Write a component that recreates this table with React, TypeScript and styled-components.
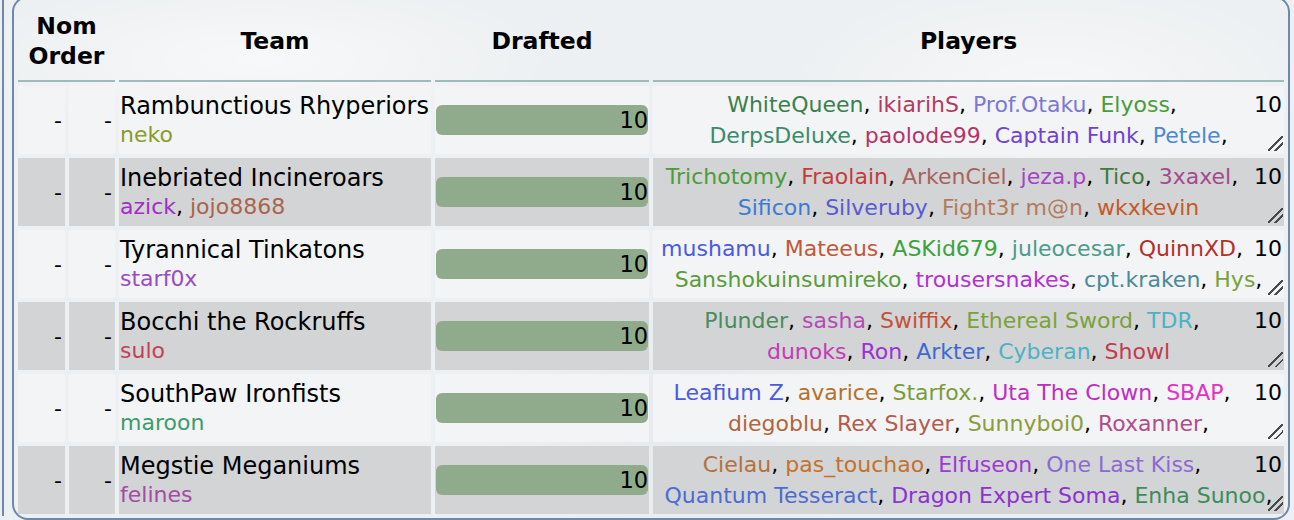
import React from 'react';
import styled, { createGlobalStyle } from 'styled-components';

const GlobalStyle = createGlobalStyle`
  html, body {
    margin: 0;
    padding: 0;
    height: 520px;
    overflow: hidden;
    background:
      radial-gradient(ellipse 420px 120px at 260px 60px, rgba(255, 255, 255, 0.55), rgba(255, 255, 255, 0) 70%),
      radial-gradient(ellipse 380px 160px at 1050px 90px, rgba(255, 255, 255, 0.5), rgba(255, 255, 255, 0) 70%),
      radial-gradient(ellipse 300px 200px at 700px 420px, rgba(220, 226, 232, 0.5), rgba(220, 226, 232, 0) 70%),
      #edf0f2;
  }
  body {
    font-family: "DejaVu Sans", Verdana, sans-serif;
    color: #000;
  }
`;

const Page = styled.div`
  height: 520px;
  box-sizing: border-box;
  margin-left: 2px;
  border-left: 2px solid #7189a9;
  padding: 0 4px 0 8px;
`;

const Panel = styled.div`
  margin-top: -4px;
  border: 2px solid #6c88ab;
  border-radius: 16px;
  overflow: hidden;
`;

const Table = styled.table`
  width: 100%;
  table-layout: fixed;
  border-collapse: separate;
  border-spacing: 4px;
`;

const HeadCell = styled.th`
  height: 78px;
  padding: 0;
  border-bottom: 2px solid #9dbbba;
  font-size: 23.5px;
  line-height: 30px;
  font-weight: bold;
  text-align: center;
  vertical-align: middle;
`;

const Cell = styled.td<{ $alt: boolean }>`
  height: 68px;
  padding: 0 1px;
  vertical-align: middle;
  background: ${p => (p.$alt ? '#d3d4d6' : '#f2f4f5')};
`;

const NomCell = styled(Cell)`
  text-align: right;
  padding-right: 3px;
  font-size: 22px;
`;

const TeamName = styled.div`
  font-size: 24px;
  line-height: 29px;
  white-space: nowrap;
`;

const Managers = styled.div`
  font-size: 22px;
  line-height: 28px;
  white-space: nowrap;
`;

const Name = styled.span<{ $color: string }>`
  color: ${p => p.$color};
`;

const Bar = styled.div`
  height: 30px;
  border-radius: 6px;
  background: #8fab8c;
  text-align: right;
  font-size: 22.5px;
  line-height: 31px;
`;

const PlayersBox = styled.div`
  height: 62px;
  overflow: hidden;
  resize: vertical;
  font-size: 22px;
  line-height: 31px;

  &::-webkit-resizer {
    background: linear-gradient(
      135deg,
      transparent 0 46%,
      #4a4a4a 46% 54%,
      transparent 54% 70%,
      #4a4a4a 70% 78%,
      transparent 78%
    );
  }
`;

const Count = styled.span`
  float: right;
  padding-left: 4px;
  padding-right: 1px;
`;

const PlayerLine = styled.div`
  text-align: center;
  white-space: nowrap;
`;

type Person = [string, string];

interface Team {
  name: string;
  managers: Person[];
  drafted: number;
  lines: Person[][];
  more: boolean;
}

const teams: Team[] = [
  {
    name: 'Rambunctious Rhyperiors',
    managers: [['neko', '#8c9a2c']],
    drafted: 10,
    lines: [
      [['WhiteQueen', '#3d7f4c'], ['ikiarihS', '#b23c5e'], ['Prof.Otaku', '#7d78d3'], ['Elyoss', '#4b9b3a']],
      [['DerpsDeluxe', '#3a8b6b'], ['paolode99', '#b2346c'], ['Captain Funk', '#7142d2'], ['Petele', '#4a8ad2']],
    ],
    more: true,
  },
  {
    name: 'Inebriated Incineroars',
    managers: [['azick', '#a12fc4'], ['jojo8868', '#a8644c']],
    drafted: 10,
    lines: [
      [['Trichotomy', '#4b9c3a'], ['Fraolain', '#c23c3c'], ['ArkenCiel', '#a8645c'], ['jeza.p', '#a444c4'], ['Tico', '#3d7b3d'], ['3xaxel', '#a24c8c']],
      [['Sificon', '#3d7ad4'], ['Silveruby', '#5a5ad2'], ['Fight3r m@n', '#b27c5c'], ['wkxkevin', '#c45a2c']],
    ],
    more: false,
  },
  {
    name: 'Tyrannical Tinkatons',
    managers: [['starf0x', '#9a4cc4']],
    drafted: 10,
    lines: [
      [['mushamu', '#4a5ae2'], ['Mateeus', '#c2583a'], ['ASKid679', '#3da23d'], ['juleocesar', '#4c9a8c'], ['QuinnXD', '#b2302a']],
      [['Sanshokuinsumireko', '#5a9c3c'], ['trousersnakes', '#b230d4'], ['cpt.kraken', '#4a8a9a'], ['Hys', '#7aa23a']],
    ],
    more: true,
  },
  {
    name: 'Bocchi the Rockruffs',
    managers: [['sulo', '#c2405c']],
    drafted: 10,
    lines: [
      [['Plunder', '#4a8c5c'], ['sasha', '#b24cb4'], ['Swiffix', '#c2523a'], ['Ethereal Sword', '#7aa23a'], ['TDR', '#4cb2c4']],
      [['dunoks', '#c23cb4'], ['Ron', '#9a32d4'], ['Arkter', '#3d6ad2'], ['Cyberan', '#4cb2c4'], ['Showl', '#c23c4c']],
    ],
    more: false,
  },
  {
    name: 'SouthPaw Ironfists',
    managers: [['maroon', '#3c9c6c']],
    drafted: 10,
    lines: [
      [['Leafium Z', '#4a5ae2'], ['avarice', '#b2722c'], ['Starfox.', '#7a9c3a'], ['Uta The Clown', '#c22cc4'], ['SBAP', '#e232c4']],
      [['diegoblu', '#b2643c'], ['Rex Slayer', '#b25c4c'], ['Sunnyboi0', '#8c9c3a'], ['Roxanner', '#b24c8c']],
    ],
    more: true,
  },
  {
    name: 'Megstie Meganiums',
    managers: [['felines', '#a24ca4']],
    drafted: 10,
    lines: [
      [['Cielau', '#b2723c'], ['pas_touchao', '#c2722c'], ['Elfuseon', '#9a3cd4'], ['One Last Kiss', '#8c6ad2']],
      [['Quantum Tesseract', '#4c6cd2'], ['Dragon Expert Soma', '#8c32d2'], ['Enha Sunoo', '#3c8c5c']],
    ],
    more: true,
  },
];

const PlayerRow: React.FC<{ people: Person[]; trailing: boolean }> = ({ people, trailing }) => (
  <PlayerLine>
    {people.map(([name, color], i) => (
      <React.Fragment key={name}>
        <Name $color={color}>{name}</Name>
        {i < people.length - 1 || trailing ? ', ' : ''}
      </React.Fragment>
    ))}
  </PlayerLine>
);

const TeamRow: React.FC<{ team: Team; alt: boolean }> = ({ team, alt }) => (
  <tr>
    <NomCell $alt={alt}>-</NomCell>
    <NomCell $alt={alt}>-</NomCell>
    <Cell $alt={alt}>
      <TeamName>{team.name}</TeamName>
      <Managers>
        {team.managers.map(([name, color], i) => (
          <React.Fragment key={name}>
            {i > 0 && ', '}
            <Name $color={color}>{name}</Name>
          </React.Fragment>
        ))}
      </Managers>
    </Cell>
    <Cell $alt={alt}>
      <Bar>{team.drafted}</Bar>
    </Cell>
    <Cell $alt={alt}>
      <PlayersBox>
        <Count>{team.drafted}</Count>
        {team.lines.map((line, i) => (
          <PlayerRow key={i} people={line} trailing={i < team.lines.length - 1 || team.more} />
        ))}
      </PlayersBox>
    </Cell>
  </tr>
);

export default function App() {
  return (
    <>
      <GlobalStyle />
      <Page>
        <Panel>
          <Table>
            <colgroup>
              <col style={{ width: 47 }} />
              <col style={{ width: 46 }} />
              <col style={{ width: 312 }} />
              <col style={{ width: 214 }} />
              <col style={{ width: 631 }} />
            </colgroup>
            <thead>
              <tr>
                <HeadCell colSpan={2}>Nom<br />Order</HeadCell>
                <HeadCell>Team</HeadCell>
                <HeadCell>Drafted</HeadCell>
                <HeadCell>Players</HeadCell>
              </tr>
            </thead>
            <tbody>
              {teams.map((team, i) => (
                <TeamRow key={team.name} team={team} alt={i % 2 === 1} />
              ))}
            </tbody>
          </Table>
        </Panel>
      </Page>
    </>
  );
}
